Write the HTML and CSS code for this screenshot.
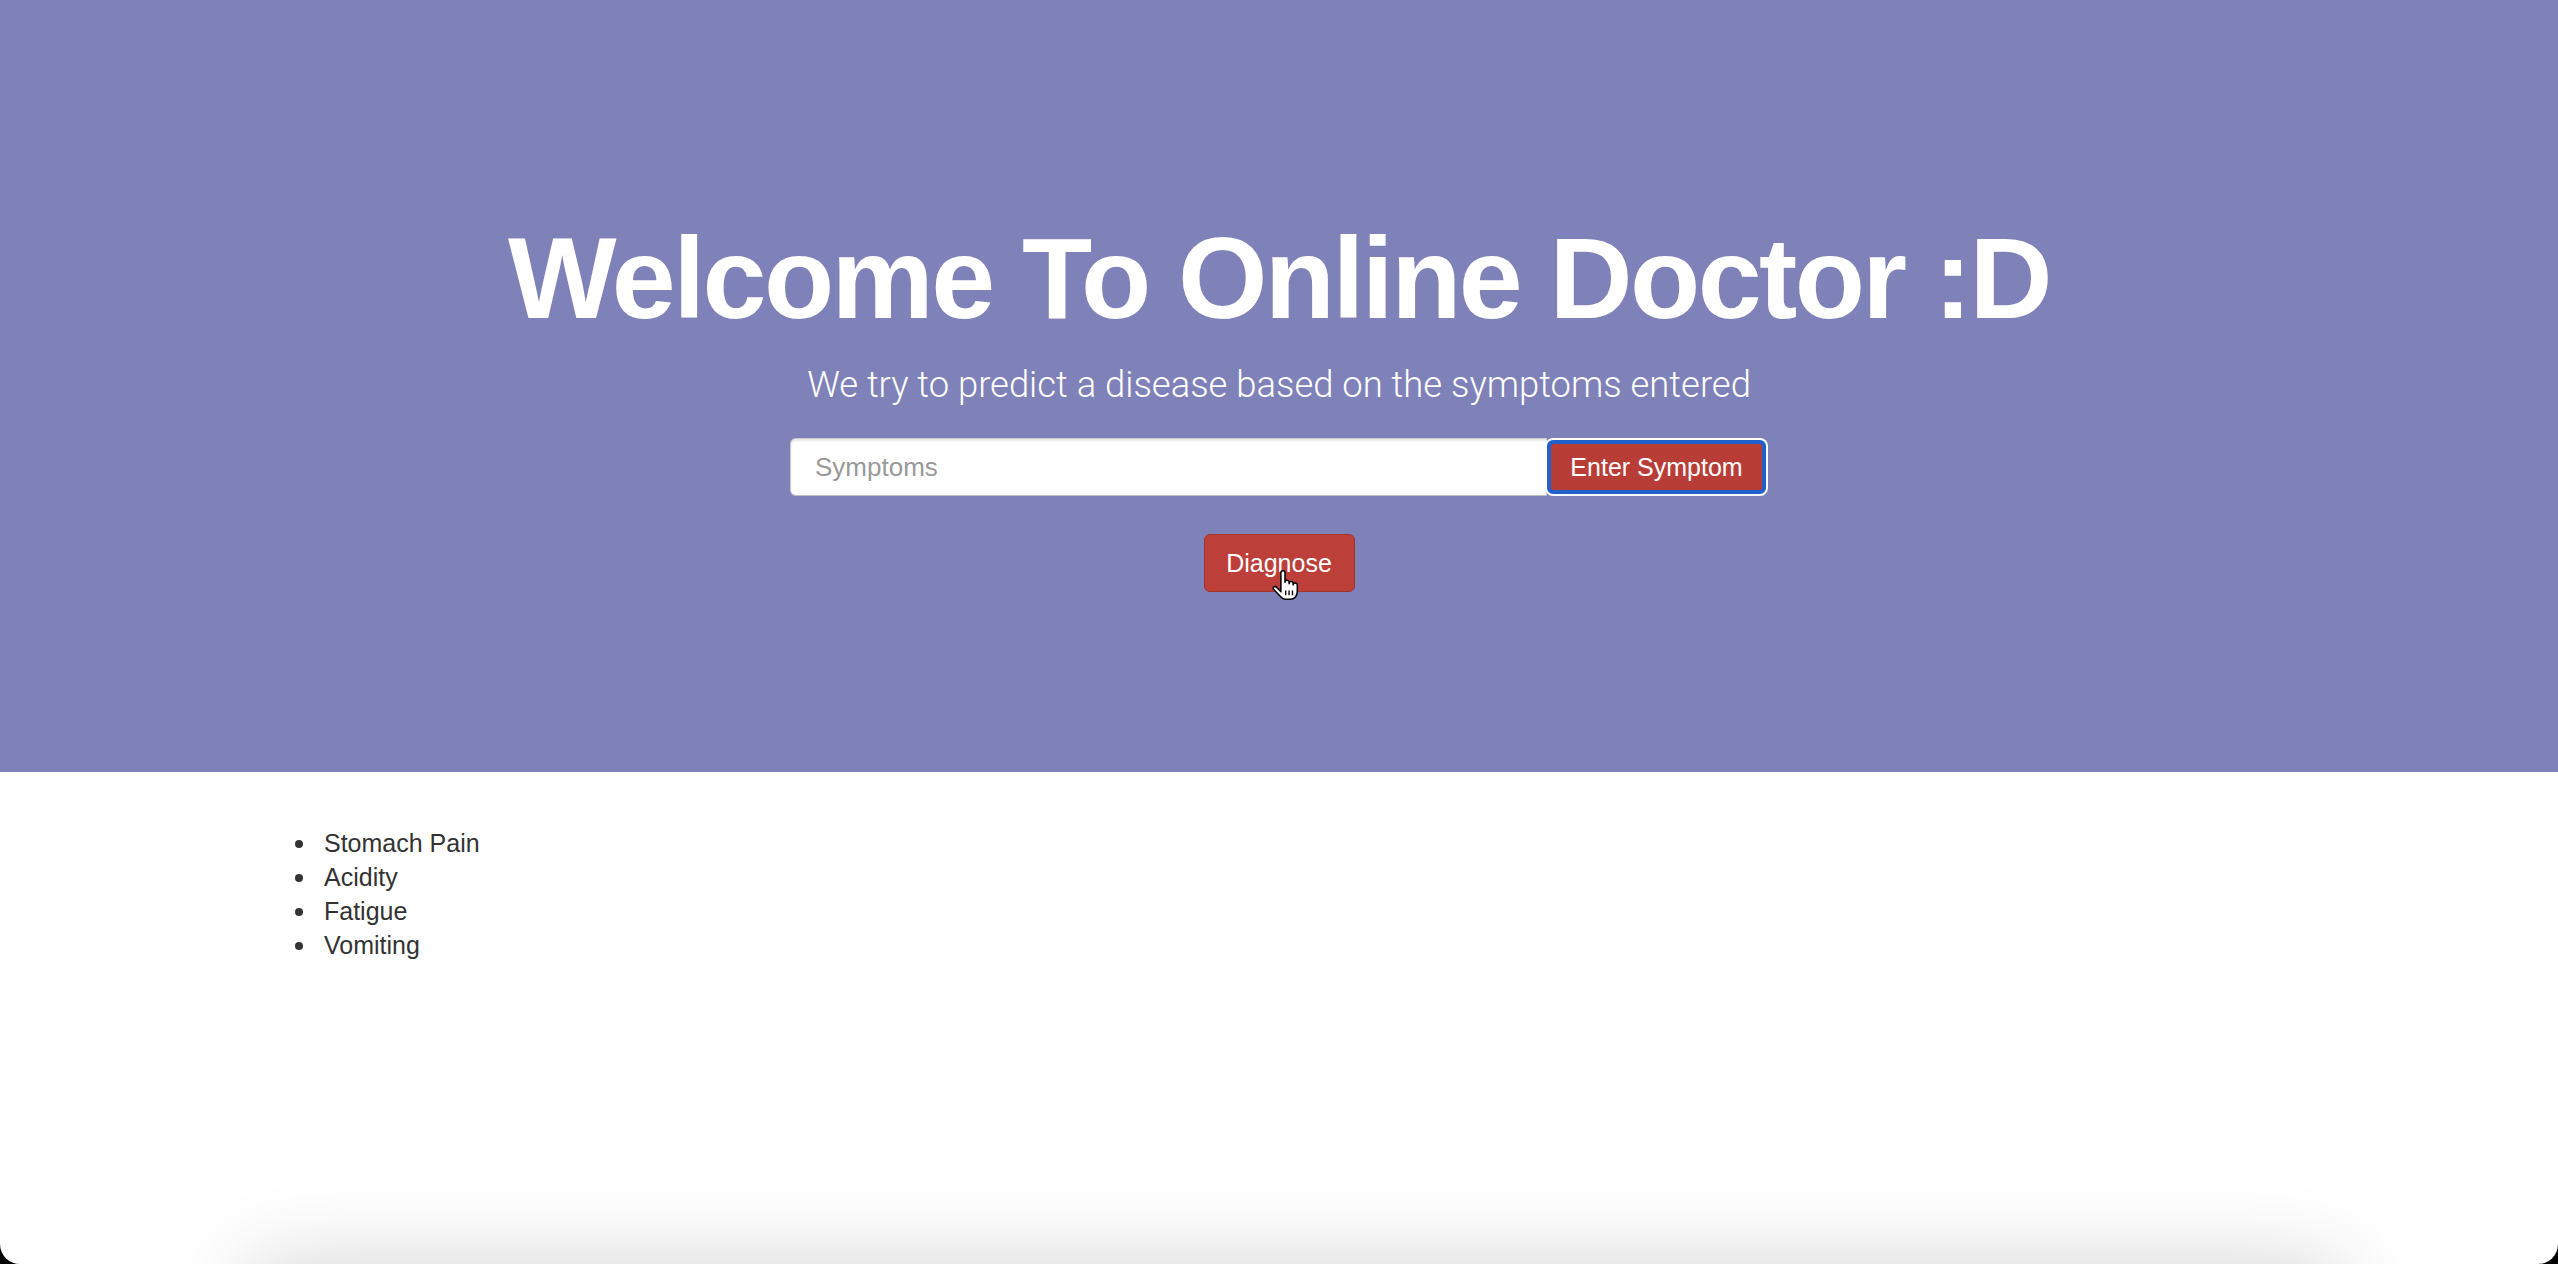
FILE: index.html
```html
<!DOCTYPE html>
<html lang="en">
<head>
<meta charset="utf-8">
<title>Online Doctor</title>
<link rel="stylesheet" href="styles.css">
</head>
<body>
<div class="page">
  <header class="jumbotron">
    <h1 class="title">Welcome To Online Doctor :D</h1>
    <p class="lead">We try to predict a disease based on the symptoms entered</p>
    <form class="input-group">
      <input class="form-control" type="text" placeholder="Symptoms">
      <button class="btn btn-enter" type="button">Enter Symptom</button>
    </form>
    <div class="diagnose-row">
      <button class="btn btn-diagnose" type="button">Diagnose</button>
    </div>
  </header>
  <main class="container">
    <ul class="symptoms">
      <li>Stomach Pain</li>
      <li>Acidity</li>
      <li>Fatigue</li>
      <li>Vomiting</li>
    </ul>
  </main>
  <div class="bottom-shadow"></div>
  <svg class="cursor" viewBox="0 0 22 23" width="30" height="32" aria-hidden="true">
    <path d="M8 14.5 V2.5 a1.5 1.5 0 0 1 3 0 V9.5 a1.5 1.5 0 0 1 3 0 V10.5 a1.5 1.5 0 0 1 3 0 V11.5 a1.5 1.5 0 0 1 3 0 V16 c0 3.5 -2 6 -5 6 h-3.5 c-1.8 0 -3 -0.8 -4 -2.3 L2.6 14.6 a1.3 1.3 0 0 1 2.2 -1.4 L8 16.5 Z" fill="#fff" stroke="#000" stroke-width="1.1" stroke-linejoin="round"/>
    <path d="M11.5 15.5 v3.5 M14 15.5 v3.5 M16.5 15.5 v3.5" stroke="#000" stroke-width="1" fill="none"/>
  </svg>
</div>
</body>
</html>
```

FILE: styles.css
```css
html, body {
  margin: 0;
  padding: 0;
  background: #000;
}

.page {
  position: relative;
  height: 1264px;
  background: #fff;
  border-radius: 0 0 20px 20px;
  overflow: hidden;
  font-family: "Liberation Sans", Arial, sans-serif;
  color: #333;
}

.jumbotron {
  box-sizing: border-box;
  height: 772px;
  padding-top: 215px;
  background: #7f81b9;
  text-align: center;
  color: #fff;
}

.title {
  margin: 0;
  font-family: "Liberation Sans", Arial, sans-serif;
  font-weight: bold;
  font-size: 115px;
  line-height: 126px;
  letter-spacing: -2.6px;
}

.lead {
  margin: 22px 0 0;
  font-family: Roboto, "Liberation Sans", sans-serif;
  font-weight: 300;
  font-size: 36.4px;
  line-height: 44px;
}

.input-group {
  display: flex;
  justify-content: center;
  margin: 31px 0 0;
}

.form-control {
  box-sizing: border-box;
  width: 757px;
  height: 58px;
  padding: 0 24px;
  border: 1px solid #c9c9cf;
  border-bottom-color: #bdbdc2;
  border-radius: 6px 0 0 6px;
  box-shadow: inset 0 2px 2px rgba(0, 0, 0, 0.09);
  font-family: "Liberation Sans", Arial, sans-serif;
  font-size: 26px;
  color: #555;
  background: #fff;
  outline: none;
}

.form-control::placeholder {
  color: #999;
}

.btn {
  box-sizing: border-box;
  font-family: "Liberation Sans", Arial, sans-serif;
  font-size: 25px;
  color: #fff;
  background: #b93d37;
  cursor: pointer;
}

.btn-enter {
  width: 219px;
  height: 54px;
  margin: 2px 2px 0 0;
  border: 4px solid #1f60cb;
  border-radius: 6px;
  box-shadow: 0 0 0 2px #fff;
}

.diagnose-row {
  display: flex;
  justify-content: center;
  margin-top: 38px;
}

.btn-diagnose {
  width: 151px;
  height: 58px;
  border: 1px solid #a3322d;
  border-radius: 6px;
  background: #bd3f39;
}

.container {
  max-width: 2030px;
  margin: 0 auto;
}

.symptoms {
  margin: 54px 0 0;
  padding-left: 31px;
  list-style: none;
  font-size: 25px;
  line-height: 34px;
  color: #333;
}

.symptoms li::before {
  content: "";
  display: inline-block;
  width: 8px;
  height: 8px;
  margin-right: 21px;
  border-radius: 50%;
  background: #333;
  vertical-align: 4px;
}

.bottom-shadow {
  position: absolute;
  left: 270px;
  right: 240px;
  top: 1290px;
  height: 100px;
  box-shadow: 0 0 90px 20px rgba(0, 0, 0, 0.2);
}

.cursor {
  position: absolute;
  left: 1270px;
  top: 569px;
}
```
